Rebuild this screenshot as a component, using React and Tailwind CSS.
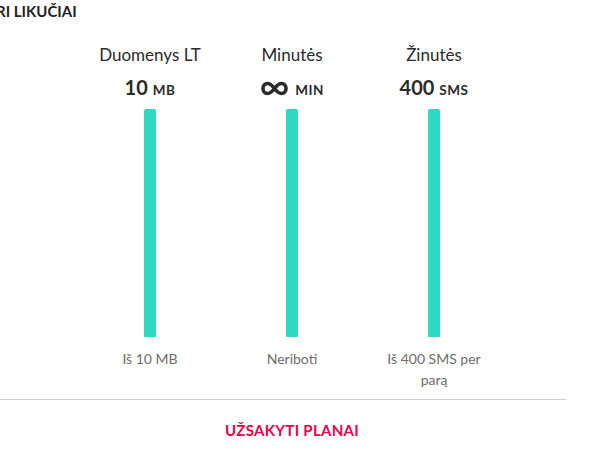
import React from 'react'

const items = [
  { title: 'Duomenys LT', value: '10', unit: 'MB', note: 'Iš 10 MB' },
  { title: 'Minutės', value: null, unit: 'MIN', note: 'Neriboti' },
  { title: 'Žinutės', value: '400', unit: 'SMS', note: 'Iš 400 SMS per parą' },
]

function Infinity() {
  return (
    <svg width="29" height="15" viewBox="0 0 29 15" className="inline-block align-[-1px]">
      <path
        d="M14.5 7.5 C11.5 3.5 9.5 2.5 7.5 2.5 C4.8 2.5 3 4.7 3 7.5 C3 10.3 4.8 12.5 7.5 12.5 C9.5 12.5 11.5 11.5 14.5 7.5 C17.5 3.5 19.5 2.5 21.5 2.5 C24.2 2.5 26 4.7 26 7.5 C26 10.3 24.2 12.5 21.5 12.5 C19.5 12.5 17.5 11.5 14.5 7.5 Z"
        fill="none"
        stroke="#2b2b2b"
        strokeWidth="3.6"
      />
    </svg>
  )
}

function Balance({ item }) {
  return (
    <div className="w-[142px] flex flex-col items-center">
      <div className="text-[17px] leading-[20px] text-[#2b2b2b] mt-[24px]">{item.title}</div>
      <div className="flex items-baseline h-[24px] mt-[10px] text-[#2b2b2b] font-bold">
        <span className={item.value ? 'text-[20px] leading-[24px] mr-[5px]' : 'text-[20px] leading-[24px] mr-[6px]'}>
          {item.value ? item.value : <Infinity />}
        </span>
        <span className="text-[13.5px] tracking-[0.5px]">{item.unit}</span>
      </div>
      <div className="w-[12px] h-[228px] mt-[10px] bg-[#2ed8c3] rounded-t-[2px] rounded-b-[1px]"></div>
      <div className="mt-[11px] max-w-[110px] text-center text-[14px] leading-[21px] text-[#6e6e6e]">
        {item.note}
      </div>
    </div>
  )
}

export default function App() {
  return (
    <div className="w-[613px] h-[462px] bg-white overflow-hidden" style={{ fontFamily: 'Lato, "Open Sans", sans-serif' }}>
      <div className="w-[566px]">
        <h2 className="-ml-[4px] mt-[1px] text-[15px] leading-[20px] font-bold text-[#222]">RI LIKUČIAI</h2>
        <div className="flex items-start ml-[79px] h-[378px]">
          {items.map((it) => (
            <Balance key={it.title} item={it} />
          ))}
        </div>
        <div className="border-t border-[#cfcfcf]"></div>
        <div className="pl-[18px] pt-[18px] text-center">
          <button className="text-[15px] font-bold text-[#e6004d] tracking-[0.3px]">UŽSAKYTI PLANAI</button>
        </div>
      </div>
    </div>
  )
}
